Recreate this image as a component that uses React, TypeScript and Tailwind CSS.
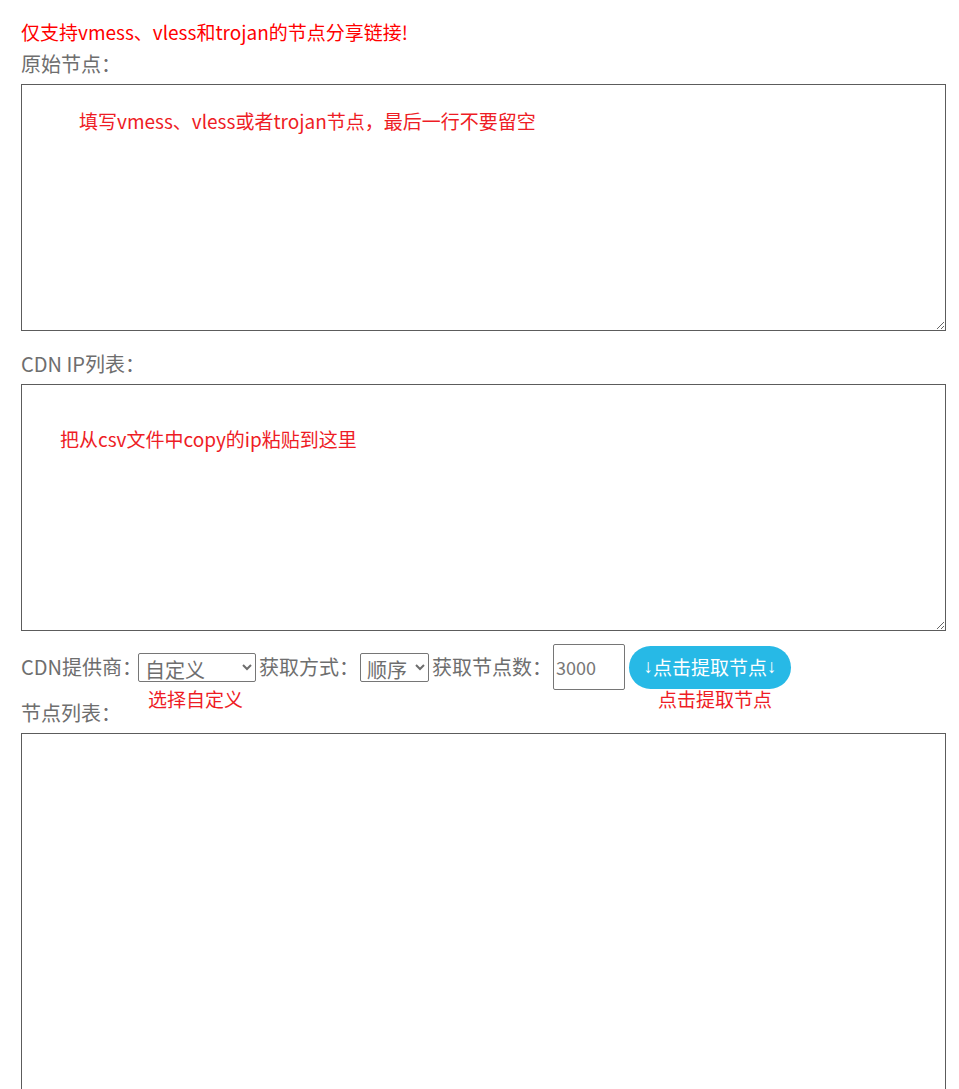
import { useState } from "react";

const font = { fontFamily: '"Noto Sans CJK SC", "Noto Sans", sans-serif' };
const arrowFont = { fontFamily: '"Liberation Sans", "DejaVu Sans", sans-serif' };

export default function App() {
  const [raw, setRaw] = useState("");
  const [ips, setIps] = useState("");
  const [count, setCount] = useState("");

  return (
    <div className="min-h-screen bg-white pt-[16px] pl-[21px] pr-[13px]" style={font}>
      <p className="text-[19px] leading-[32px] text-[#ff0000]">仅支持vmess、vless和trojan的节点分享链接!</p>
      <p className="text-[20px] leading-[32px] text-[#6e6e6e]">原始节点：</p>

      {/* 原始节点 */}
      <div className="relative mt-[4px]">
        <textarea
          value={raw}
          onChange={(e) => setRaw(e.target.value)}
          className="block h-[247px] w-full border border-[#5c5c5c] bg-white p-[2px] text-[16px] outline-none"
        />
        <span className="pointer-events-none absolute left-[58px] top-[26px] text-[19px] leading-[22px] text-[#ee1c25]">
          填写vmess、vless或者trojan节点，最后一行不要留空
        </span>
      </div>

      <p className="mt-[17px] text-[20px] leading-[32px] text-[#6e6e6e]">CDN IP列表：</p>

      {/* CDN IP */}
      <div className="relative mt-[4px]">
        <textarea
          value={ips}
          onChange={(e) => setIps(e.target.value)}
          className="block h-[247px] w-full border border-[#5c5c5c] bg-white p-[2px] text-[16px] outline-none"
        />
        <span className="pointer-events-none absolute left-[39px] top-[44px] text-[19px] leading-[22px] text-[#ee1c25]">
          把从csv文件中copy的ip粘贴到这里
        </span>
      </div>

      {/* 控制栏 */}
      <div className="relative mt-[13px] flex h-[46px] items-center text-[20px] text-[#6e6e6e]">
        <span className="w-[117px] whitespace-nowrap">CDN提供商：</span>
        <select className="h-[29px] w-[118px] rounded-[2px] border border-[#767676] bg-white pl-[2px] text-[20px] leading-[24px] text-[#6e6e6e]">
          <option>自定义</option>
          <option>Cloudflare</option>
        </select>
        <span className="ml-[3px] w-[101px] whitespace-nowrap">获取方式：</span>
        <select className="h-[29px] w-[69px] rounded-[2px] border border-[#767676] bg-white pl-[2px] text-[20px] leading-[24px] text-[#6e6e6e]">
          <option>顺序</option>
          <option>随机</option>
        </select>
        <span className="ml-[3px] w-[121px] whitespace-nowrap">获取节点数：</span>
        <input
          value={count}
          onChange={(e) => setCount(e.target.value)}
          placeholder="3000"
          className="h-[46px] w-[72px] rounded-[2px] border border-[#767676] bg-white px-[2px] text-[18px] text-[#6e6e6e] placeholder:text-[#777777] outline-none"
        />
        <button className="ml-[4px] flex h-[43px] w-[162px] items-center justify-center rounded-full bg-[#27b9e6] text-[19px] text-white">
          <span style={arrowFont}>↓</span>
          <span>点击提取节点</span>
          <span style={arrowFont}>↓</span>
        </button>
        <span className="pointer-events-none absolute left-[127px] top-[45px] text-[19px] leading-[20px] text-[#ee1c25]">选择自定义</span>
        <span className="pointer-events-none absolute left-[637px] top-[45px] text-[19px] leading-[20px] text-[#ee1c25]">点击提取节点</span>
      </div>

      <p className="mt-[7px] text-[20px] leading-[32px] text-[#6e6e6e]">节点列表：</p>
      <textarea
        readOnly
        className="mt-[4px] block h-[420px] w-full border border-[#5c5c5c] bg-white p-[2px] text-[16px] outline-none"
      />
    </div>
  );
}
